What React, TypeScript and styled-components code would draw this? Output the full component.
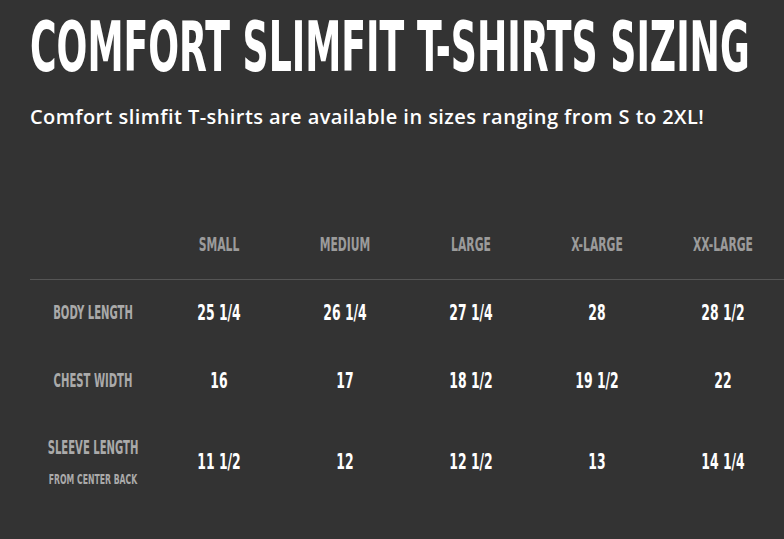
import React from 'react';
import styled, { createGlobalStyle } from 'styled-components';

const GlobalStyle = createGlobalStyle`
  html, body {
    margin: 0;
    padding: 0;
    background: #333333;
  }
  body {
    overflow: hidden;
  }
`;

// tall narrow display face stand-in (stretched vertically)
const condensed = `"DejaVu Sans Condensed", "Liberation Sans Narrow", "Liberation Sans", sans-serif`;

type SizeRow = {
    label: string
    note?: string
    values: Array<string>
    height: number
}

const sizes = ['SMALL', 'MEDIUM', 'LARGE', 'X-LARGE', 'XX-LARGE'];

const rows: Array<SizeRow> = [
    { label: 'BODY LENGTH', values: ['25 1/4', '26 1/4', '27 1/4', '28', '28 1/2'], height: 68 },
    { label: 'CHEST WIDTH', values: ['16', '17', '18 1/2', '19 1/2', '22'], height: 68 },
    { label: 'SLEEVE LENGTH', note: 'FROM CENTER BACK', values: ['11 1/2', '12', '12 1/2', '13', '14 1/4'], height: 94 },
];

const App = () => {
    return (
        <Page>
            <GlobalStyle />
            <Title>COMFORT SLIMFIT T-SHIRTS SIZING</Title>
            <Intro>Comfort slimfit T-shirts are available in sizes ranging from S to 2XL!</Intro>
            <SizeTable>
                <HeaderRow $h={68}>
                    <span />
                    {sizes.map((s) => (
                        <HeadCell key={s}>{s}</HeadCell>
                    ))}
                </HeaderRow>
                {rows.map((r) => (
                    <Row key={r.label} $h={r.height}>
                        <LabelStack>
                            <LabelCell>{r.label}</LabelCell>
                            {r.note ? <NoteCell>{r.note}</NoteCell> : ''}
                        </LabelStack>
                        {r.values.map((v, i) => (
                            <ValueCell key={r.label + i}>{v}</ValueCell>
                        ))}
                    </Row>
                ))}
            </SizeTable>
        </Page>
    )
}

const Page = styled.div`
    width: 784px;
    height: 539px;
    box-sizing: border-box;
    padding: 24px 0 0 30px;
    background: #333333;
    overflow: hidden;
`

const Title = styled.h1`
    margin: 0;
    font-family: ${condensed};
    font-weight: 700;
    font-size: 40.3px;
    line-height: 49px;
    color: #ffffff;
    white-space: nowrap;
    transform: scaleY(1.7);
    transform-origin: center;
`

const Intro = styled.p`
    margin: 29px 0 0;
    font-family: "Open Sans", "Liberation Sans", sans-serif;
    font-weight: 600;
    font-size: 20px;
    line-height: 30px;
    letter-spacing: 0.43px;
    color: #ffffff;
    white-space: nowrap;
`

const SizeTable = styled.div`
    margin-top: 77px;
    width: 756px;
`

const Row = styled.div<{ $h: number }>`
    display: grid;
    grid-template-columns: repeat(6, 126px);
    align-items: center;
    justify-items: center;
    height: ${(p) => p.$h}px;
`

const HeaderRow = styled(Row)`
    padding-top: 2px;
    border-bottom: 1px solid #555555;
`

const HeadCell = styled.span`
    display: inline-block;
    font-family: ${condensed};
    font-weight: 700;
    font-size: 12px;
    line-height: 1;
    color: #9b9b9b;
    transform: scaleY(1.55);
`

const LabelStack = styled.div`
    display: flex;
    flex-direction: column;
    align-items: center;
    gap: 21px;
`

const LabelCell = styled.span`
    display: inline-block;
    font-family: ${condensed};
    font-weight: 700;
    font-size: 11.2px;
    line-height: 1;
    color: #aaaaaa;
    white-space: nowrap;
    transform: scaleY(1.7);
`

const NoteCell = styled(LabelCell)`
    font-size: 8.6px;
`

const ValueCell = styled.span`
    display: inline-block;
    font-family: ${condensed};
    font-weight: 700;
    font-size: 13.8px;
    line-height: 1;
    color: #ffffff;
    white-space: nowrap;
    transform: scaleY(1.5);
`

export default App
